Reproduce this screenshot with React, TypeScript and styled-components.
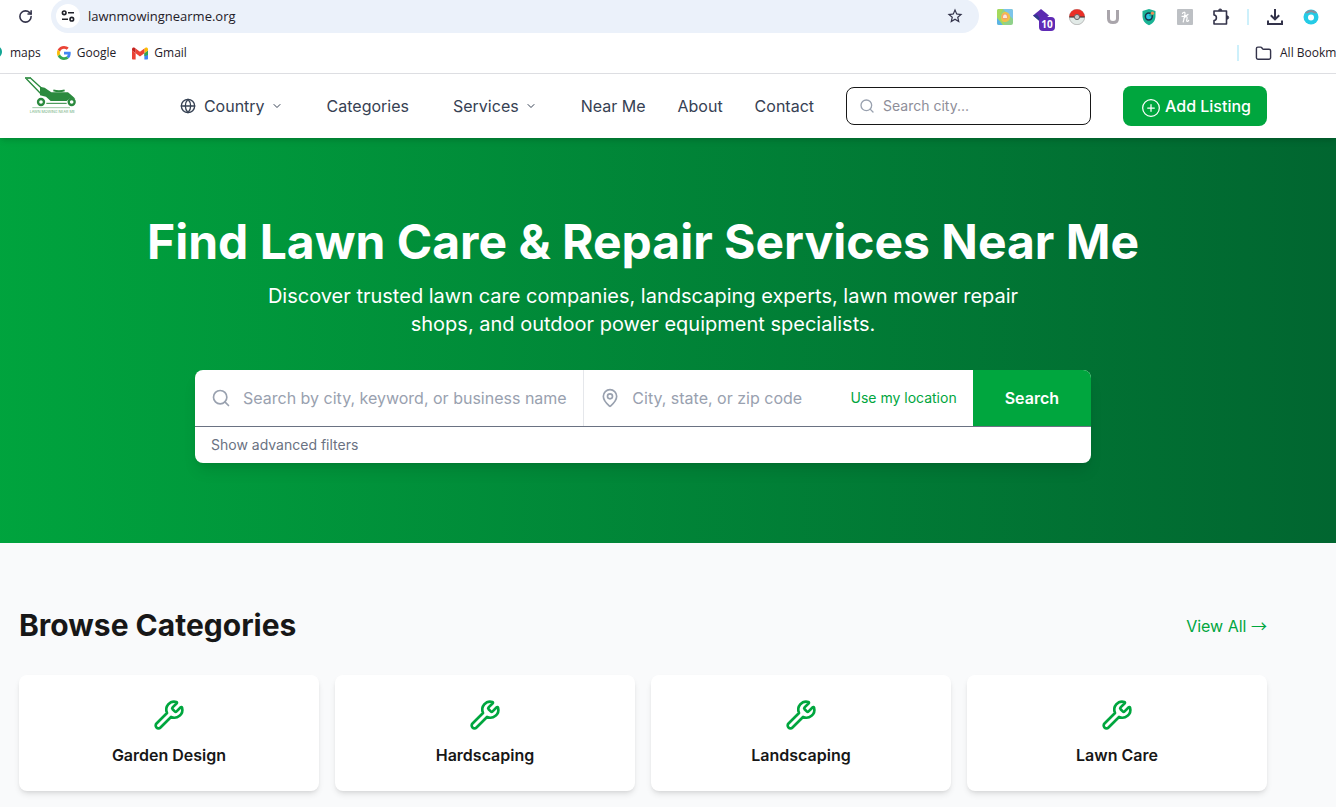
import React from 'react';
import styled, { createGlobalStyle } from 'styled-components';
import { ChevronDown, CirclePlus, Folder, Globe, MapPin, RotateCw, Search, Wrench } from 'lucide-react';

const GlobalStyle = createGlobalStyle`
  *, *::before, *::after { box-sizing: border-box; }
  body {
    margin: 0;
    background: #f9fafb;
    color: #171717;
    font-family: Inter, "Liberation Sans", sans-serif;
    font-size: 16px;
    line-height: 24px;
    overflow-x: hidden;
  }
  h1, h2, h3, p { margin: 0; }
  button, input { font: inherit; color: inherit; border: 0; background: none; padding: 0; }
  button { cursor: pointer; }
  input:focus { outline: none; }
  a { color: inherit; text-decoration: none; }
  svg { display: block; flex-shrink: 0; }
`;

/* ---------- browser bar ---------- */

const BrowserBar = styled.div`
  background: #fff;
  border-bottom: 1px solid #dedfe3;
  font-family: "Open Sans", "Noto Sans", sans-serif;
  color: #1f2028;
  overflow: hidden;
`;

const Toolbar = styled.div`
  display: flex;
  align-items: center;
  height: 33px;
  padding-right: 7px;
`;

const ToolButton = styled.button<{ $width?: number }>`
  width: ${(p) => p.$width ?? 36}px;
  height: 32px;
  flex-shrink: 0;
  display: flex;
  align-items: center;
  justify-content: center;
  color: #33334a;
`;

const AddressPill = styled.div`
  flex: 1;
  display: flex;
  align-items: center;
  gap: 8px;
  height: 34px;
  margin: -2px 8px 0 0;
  padding: 0 6px 0 5px;
  border-radius: 17px;
  background: #ebf1fa;
`;

const SiteInfo = styled.button`
  width: 24px;
  height: 24px;
  border-radius: 12px;
  background: #fff;
  display: flex;
  align-items: center;
  justify-content: center;
`;

const AddressInput = styled.input`
  flex: 1;
  min-width: 0;
  font-size: 13px;
  line-height: 20px;
`;

const Divider = styled.span<{ $slot: number }>`
  width: ${(p) => p.$slot}px;
  flex-shrink: 0;
  display: flex;
  justify-content: center;
  &::before {
    content: "";
    width: 2px;
    height: 16px;
    background: #cdf0fb;
  }
`;

const BadgeHolder = styled.span`
  position: relative;
  display: block;
`;

const CountBadge = styled.span`
  position: absolute;
  left: 6px;
  top: 8px;
  width: 16px;
  height: 14px;
  border-radius: 4px;
  background: #5f2bb5;
  color: #fff;
  font: 700 10px/14px "Open Sans", sans-serif;
  text-align: center;
`;

const Bookmarks = styled.div`
  display: flex;
  align-items: center;
  height: 40px;
  font-size: 12px;
  line-height: 16px;
  white-space: nowrap;
`;

const Bookmark = styled.a`
  display: flex;
  align-items: center;
  gap: 6px;
  margin-right: 16px;
`;

const BookmarkList = styled.div`
  display: flex;
  flex: 1;
  margin-left: -12px;
`;

const AllBookmarks = styled.button`
  display: flex;
  align-items: center;
  gap: 8px;
  margin-right: -24px;
  svg { color: #33334a; }
`;

/* ---------- site ---------- */

const Container = styled.div`
  max-width: 1280px;
  margin: 0 auto;
  padding: 0 16px;
`;

const Header = styled.header`
  position: relative;
  z-index: 1;
  background: #fff;
  padding-right: 50px;
  box-shadow: 0 4px 6px -1px rgba(0, 0, 0, 0.1), 0 2px 4px -2px rgba(0, 0, 0, 0.1);
`;

const HeaderRow = styled(Container)`
  display: flex;
  justify-content: space-between;
  align-items: center;
  height: 64px;
`;

const LogoLink = styled.a`
  align-self: flex-start;
  padding: 3px 0 0 5px;
`;

const Nav = styled.nav`
  display: flex;
  align-items: center;
  gap: 32px;
  color: #364153;
  white-space: nowrap;
`;

const MenuButton = styled.button`
  display: flex;
  align-items: center;
  padding: 0 12px;
`;

const MenuLabel = styled.span`
  display: flex;
  align-items: center;
  gap: 8px;
  margin-right: 6px;
`;

const CitySearch = styled.label`
  display: flex;
  align-items: center;
  gap: 8px;
  width: 245px;
  height: 38px;
  padding: 0 12px;
  border: 1px solid #171717;
  border-radius: 8px;
  color: #99a1af;
`;

const CityInput = styled.input`
  flex: 1;
  min-width: 0;
  font-size: 14px;
  line-height: 20px;
  color: #171717;
  &::placeholder { color: #8e8e99; opacity: 1; }
`;

const AddListing = styled.button`
  display: flex;
  align-items: center;
  gap: 4px;
  height: 40px;
  padding: 0 16px 0 18px;
  border-radius: 8px;
  background: #00a63e;
  color: #fff;
  font-weight: 500;
  svg { margin-top: 3px; }
`;

const Hero = styled.section`
  padding: 80px 50px 80px 0;
  background: linear-gradient(to right in oklab, #00a63e -50px, #016630 100%);
  color: #fff;
  text-align: center;
`;

const HeroTitle = styled.h1`
  font-size: 48px;
  line-height: 48px;
  font-weight: 700;
`;

const HeroText = styled.p`
  max-width: 768px;
  margin: 16px auto 32px;
  font-size: 20px;
  line-height: 28px;
`;

const SearchPanel = styled.form`
  max-width: 896px;
  margin: 0 auto;
  background: #fff;
  border-radius: 8px;
  overflow: hidden;
  text-align: left;
  box-shadow: 0 10px 15px -3px rgba(0, 0, 0, 0.1), 0 4px 6px -4px rgba(0, 0, 0, 0.1);
`;

const SearchRow = styled.div`
  display: flex;
  height: 56px;
`;

const Field = styled.div<{ $divided?: boolean }>`
  flex: 1;
  min-width: 0;
  display: flex;
  align-items: center;
  padding: 0 16px;
  color: #99a1af;
  border-right: ${(p) => (p.$divided ? '1px solid #e5e7eb' : '0')};
`;

const FieldInput = styled.input`
  flex: 1;
  min-width: 0;
  margin-left: 12px;
  color: #171717;
  &::placeholder { color: #99a1af; opacity: 1; }
`;

const LocateButton = styled.button`
  font-size: 14px;
  line-height: 20px;
  color: #00a63e;
`;

const SubmitButton = styled.button`
  padding: 0 32px;
  background: #00a63e;
  color: #fff;
  font-weight: 600;
`;

const FiltersRow = styled.div`
  display: flex;
  align-items: center;
  height: 37px;
  padding: 0 16px;
  border-top: 1px solid #6a7282;
`;

const FiltersButton = styled.button`
  font-size: 14px;
  line-height: 20px;
  color: #6a7282;
`;

const Categories = styled.section`
  padding: 64px 50px 16px 0;
`;

const SectionHead = styled.div`
  display: flex;
  align-items: center;
  justify-content: space-between;
  height: 36px;
  margin-bottom: 32px;
`;

const SectionTitle = styled.h2`
  font-size: 30px;
  line-height: 36px;
  font-weight: 700;
`;

const ViewAll = styled.a`
  color: #00a63e;
`;

const Arrow = styled.span`
  font-family: "Noto Sans CJK JP", sans-serif;
`;

const CardGrid = styled.div`
  display: grid;
  grid-template-columns: repeat(4, 1fr);
  gap: 16px;
`;

const Card = styled.a`
  display: flex;
  flex-direction: column;
  align-items: center;
  gap: 12px;
  padding: 24px;
  border-radius: 8px;
  background: #fff;
  box-shadow: 0 4px 6px -1px rgba(0, 0, 0, 0.1), 0 2px 4px -2px rgba(0, 0, 0, 0.1);
  svg { color: #00a63e; }
`;

const CardTitle = styled.h3`
  font-size: 16px;
  line-height: 24px;
  font-weight: 600;
`;

/* ---------- drawings ---------- */

const TuneIcon = () => (
  <svg width="14" height="12" viewBox="0 0 14 12" fill="none" stroke="#1f2028" strokeWidth="1.6">
    <circle cx="3.2" cy="2.8" r="1.8" />
    <path d="M7 2.8h6M1 9.2h6" />
    <circle cx="10.8" cy="9.2" r="1.8" />
  </svg>
);

const StarOutline = () => (
  <svg width="18" height="18" viewBox="0 0 24 24" fill="#33334a">
    <path d="M22 9.240l-7.190-.62L12 2 9.190 8.630 2 9.240l5.460 4.730L5.820 21 12 17.270 18.180 21l-1.630-7.030L22 9.240zM12 15.400l-3.760 2.270 1-4.280-3.320-2.880 4.380-.38L12 6.100l1.710 4.040 4.380.38-3.320 2.880 1 4.280L12 15.400z" />
  </svg>
);

const MapTile = () => (
  <svg width="16" height="16" viewBox="0 0 16 16">
    <rect width="16" height="16" rx="2" fill="#8fd18a" />
    <path d="M6 0h8a2 2 0 0 1 2 2v8z" fill="#7cc4ea" />
    <path d="M0 9l6 7H2a2 2 0 0 1-2-2z" fill="#5bb3e6" />
    <path d="M0 2a2 2 0 0 1 2-2h4L3 8l5 8H6L0 8z" fill="#a5d95c" />
    <path d="M8 3c3.400 0 5 2.500 5 5 0 3-2.300 5-5.500 5C5 13 4 11 4 8.500 4 5.500 5.500 3 8 3z" fill="#f2c14a" />
    <circle cx="8" cy="7.500" r="3" fill="#f3a26c" />
    <path d="M8 5.500c1.600 0 2 1.500 2 3.500H6c0-2 .4-3.500 2-3.500z" fill="#fbe9dc" />
  </svg>
);

const Diamond = () => (
  <svg width="16" height="16" viewBox="0 0 16 16">
    <path d="M8 0l8 6.500-8 6.500-8-6.500z" fill="#5c2bb0" />
    <path d="M0 6.500l4-1 5 7-1 1z" fill="#2f3b8c" />
  </svg>
);

const Ball = () => (
  <svg width="16" height="16" viewBox="0 0 16 16">
    <circle cx="8" cy="8" r="7.700" fill="#e2eae7" stroke="#9a9a9a" strokeWidth=".6" />
    <path d="M.2 8a7.800 7.800 0 0 1 15.600 0z" fill="#ea2f26" />
    <path d="M.3 8h15.400" stroke="#4b3a3a" strokeWidth="1.200" />
    <circle cx="8" cy="8" r="2.600" fill="#c9c9c9" stroke="#666" strokeWidth="1" />
  </svg>
);

const LetterU = () => (
  <svg width="14" height="16" viewBox="0 0 14 16" fill="none" stroke="#a9a5ab" strokeWidth="3">
    <path d="M2.500 1v8.500c0 2.700 1.700 4 4.500 4s4.500-1.300 4.500-4V1" />
  </svg>
);

const Shield = () => (
  <svg width="16" height="18" viewBox="0 0 16 18">
    <path d="M8 1l6.500 2v5c0 4.500-2.500 7.500-6.500 9.300C4 15.500 1.500 12.500 1.500 8V3z" fill="#19b394" />
    <circle cx="7.800" cy="8.500" r="3.400" fill="#27c5e0" stroke="#16324a" strokeWidth="1.500" />
    <path d="M8.500 8l2.800-2.800" stroke="#19b394" strokeWidth="2" />
    <circle cx="11.500" cy="5.200" r="1.600" fill="#ee8a54" />
  </svg>
);

const HoneyTile = () => (
  <svg width="16" height="16" viewBox="0 0 16 16" fill="none" stroke="#fff" strokeLinecap="round">
    <rect width="16" height="16" rx="1" fill="#bdc0c4" stroke="none" />
    <path d="M5.500 4.500C6 3 8 2.600 8 4.500c0 2.500-1.200 6-1.800 8.500M6.800 9.500c1-2 3.600-2.800 3.300-.5-.2 1.500-1 3.500.2 3.500.8 0 1.200-.7 1.400-1.200M5 7.300c2 .3 4.500-.3 6-1.800" strokeWidth="1.200" />
  </svg>
);

const Puzzle = () => (
  <svg width="18" height="18" viewBox="0 0 18 18" fill="none" stroke="#33334a" strokeWidth="1.600" strokeLinejoin="round">
    <path d="M2 3h12.500v13H2v-3.500c3.200-.2 3.200-5.300 0-5.500z" />
    <path d="M6.500 2.600a1.700 1.700 0 0 1 3.400 0zM15 7.800a1.700 1.700 0 0 1 0 3.400z" fill="#33334a" strokeWidth=".8" />
  </svg>
);

const DownloadTray = () => (
  <svg width="18" height="18" viewBox="0 0 18 18" fill="none" stroke="#33334a" strokeWidth="2">
    <path d="M9 1v10M4.800 7.200L9 11.400l4.200-4.200M2 12.500V16h14v-3.500" />
  </svg>
);

const Avatar = () => (
  <svg width="16" height="16" viewBox="0 0 16 16">
    <circle cx="8" cy="8" r="7.500" fill="#25cbe6" />
    <path d="M2 4a7.500 7.500 0 0 1 12 0L8 5z" fill="#8f8f9b" />
    <circle cx="8" cy="8.300" r="5" fill="#25cbe6" />
    <circle cx="8" cy="8.500" r="3" fill="#fff" />
  </svg>
);

const PinDot = () => (
  <svg width="16" height="16" viewBox="0 0 16 16">
    <path d="M6 1a6 6 0 0 1 8 6c0 2-1 3-2 4.500L6 16z" fill="#12a594" />
  </svg>
);

const GoogleG = () => (
  <svg width="14" height="14" viewBox="0 0 48 48">
    <path fill="#EA4335" d="M24 9.500c3.540 0 6.710 1.220 9.210 3.600l6.850-6.850C35.900 2.380 30.470 0 24 0 14.620 0 6.510 5.380 2.560 13.220l7.980 6.190C12.430 13.720 17.740 9.500 24 9.500z" />
    <path fill="#4285F4" d="M46.980 24.550c0-1.570-.15-3.090-.38-4.550H24v9.020h12.940c-.58 2.960-2.260 5.480-4.780 7.180l7.730 6c4.510-4.180 7.090-10.360 7.090-17.650z" />
    <path fill="#FBBC05" d="M10.530 28.590c-.48-1.450-.76-2.990-.76-4.590s.27-3.140.76-4.590l-7.980-6.190C.92 16.460 0 20.120 0 24c0 3.880.92 7.540 2.560 10.780l7.970-6.190z" />
    <path fill="#34A853" d="M24 48c6.480 0 11.930-2.130 15.890-5.810l-7.730-6c-2.150 1.450-4.920 2.300-8.160 2.300-6.260 0-11.570-4.220-13.470-9.910l-7.980 6.190C6.510 42.620 14.620 48 24 48z" />
  </svg>
);

const GmailM = () => (
  <svg width="16" height="13" viewBox="52 42 88 66">
    <path fill="#4285f4" d="M120 108h14c3.320 0 6-2.690 6-6V59l-20 15" />
    <path fill="#34a853" d="M120 90V74l20-15v24z" />
    <path fill="#fbbc04" d="M120 48v26l20-15v-8c0-7.420-8.470-11.650-14.400-7.200" />
    <path fill="#ea4335" d="M72 74V48l24 18 24-18v26L96 92" />
    <path fill="#c5221f" d="M52 51v8l20 15V48l-5.600-4.200c-5.940-4.450-14.400-.22-14.400 7.200" />
    <path fill="#ea4335" d="M52 59v43c0 3.320 2.690 6 6 6h14V74z" />
  </svg>
);

const MowerLogo = () => (
  <svg width="53" height="37" viewBox="72 231 159 111" fill="none" stroke="#2b8a3e" role="img" aria-label="Lawn Mowing Near Me">
    <path d="M75 234h18" strokeWidth="5" />
    <path d="M79 236l42 44M92 235l32 29" strokeWidth="4" />
    <path d="M120 260l14 3 20 14h50l14 12 8 7h-18l-8 7h-48l-14-13-18-4z" fill="#2b8a3e" stroke="none" />
    <path d="M160 271q17 5 34 0" strokeWidth="5" />
    <circle cx="123" cy="306" r="9" strokeWidth="7" fill="#fff" />
    <circle cx="215" cy="306" r="9" strokeWidth="7" fill="#fff" />
    <path d="M139 310h61" strokeWidth="3" />
    <path d="M97 323h113" strokeWidth="2" opacity=".7" />
    <text x="157" y="340" textAnchor="middle" fontFamily="Inter, sans-serif" fontSize="11" fill="#2b8a3e" stroke="none" opacity=".7">LAWN MOWING NEAR ME</text>
  </svg>
);

const categories = ['Garden Design', 'Hardscaping', 'Landscaping', 'Lawn Care'];

export default function App() {
  return (
    <>
      <GlobalStyle />
      <BrowserBar>
        <Toolbar>
          <ToolButton $width={51} aria-label="Reload"><RotateCw size={15} strokeWidth={2.5} /></ToolButton>
          <AddressPill>
            <SiteInfo aria-label="Site information"><TuneIcon /></SiteInfo>
            <AddressInput aria-label="Address" defaultValue="lawnmowingnearme.org" />
            <ToolButton aria-label="Bookmark this page"><StarOutline /></ToolButton>
          </AddressPill>
          <ToolButton aria-label="Map extension"><MapTile /></ToolButton>
          <ToolButton aria-label="Tag extension">
            <BadgeHolder><Diamond /><CountBadge>10</CountBadge></BadgeHolder>
          </ToolButton>
          <ToolButton aria-label="Ball extension"><Ball /></ToolButton>
          <ToolButton aria-label="U extension"><LetterU /></ToolButton>
          <ToolButton aria-label="Shield extension"><Shield /></ToolButton>
          <ToolButton aria-label="Coupon extension"><HoneyTile /></ToolButton>
          <ToolButton aria-label="Extensions"><Puzzle /></ToolButton>
          <Divider $slot={18} />
          <ToolButton aria-label="Downloads"><DownloadTray /></ToolButton>
          <ToolButton aria-label="Profile"><Avatar /></ToolButton>
        </Toolbar>
        <Bookmarks>
          <BookmarkList>
            <Bookmark href="#"><PinDot />maps</Bookmark>
            <Bookmark href="#"><GoogleG />Google</Bookmark>
            <Bookmark href="#"><GmailM />Gmail</Bookmark>
          </BookmarkList>
          <Divider $slot={34} />
          <AllBookmarks><Folder size={17} />All Bookmarks</AllBookmarks>
        </Bookmarks>
      </BrowserBar>

      <Header>
        <HeaderRow>
          <LogoLink href="#"><MowerLogo /></LogoLink>
          <Nav>
            <MenuButton><MenuLabel><Globe size={16} />Country</MenuLabel><ChevronDown size={12} /></MenuButton>
            <a href="#">Categories</a>
            <MenuButton><MenuLabel>Services</MenuLabel><ChevronDown size={12} /></MenuButton>
            <a href="#">Near Me</a>
            <a href="#">About</a>
            <a href="#">Contact</a>
            <CitySearch>
              <Search size={16} />
              <CityInput type="text" aria-label="Search city" placeholder="Search city..." />
            </CitySearch>
            <AddListing><CirclePlus size={20} strokeWidth={1.5} />Add Listing</AddListing>
          </Nav>
        </HeaderRow>
      </Header>

      <main>
        <Hero>
          <Container>
            <HeroTitle>Find Lawn Care &amp; Repair Services Near Me</HeroTitle>
            <HeroText>
              Discover trusted lawn care companies, landscaping experts, lawn mower repair shops, and outdoor power
              equipment specialists.
            </HeroText>
            <SearchPanel onSubmit={(e: React.FormEvent) => e.preventDefault()}>
              <SearchRow>
                <Field $divided>
                  <Search size={20} />
                  <FieldInput type="text" aria-label="Keyword" placeholder="Search by city, keyword, or business name" />
                </Field>
                <Field>
                  <MapPin size={20} />
                  <FieldInput type="text" aria-label="Location" placeholder="City, state, or zip code" />
                  <LocateButton type="button">Use my location</LocateButton>
                </Field>
                <SubmitButton type="submit">Search</SubmitButton>
              </SearchRow>
              <FiltersRow>
                <FiltersButton type="button">Show advanced filters</FiltersButton>
              </FiltersRow>
            </SearchPanel>
          </Container>
        </Hero>

        <Categories>
          <Container>
            <SectionHead>
              <SectionTitle>Browse Categories</SectionTitle>
              <ViewAll href="#">View All <Arrow>→</Arrow></ViewAll>
            </SectionHead>
            <CardGrid>
              {categories.map((name) => (
                <Card href="#" key={name}>
                  <Wrench size={32} />
                  <CardTitle>{name}</CardTitle>
                </Card>
              ))}
            </CardGrid>
          </Container>
        </Categories>
      </main>
    </>
  );
}
